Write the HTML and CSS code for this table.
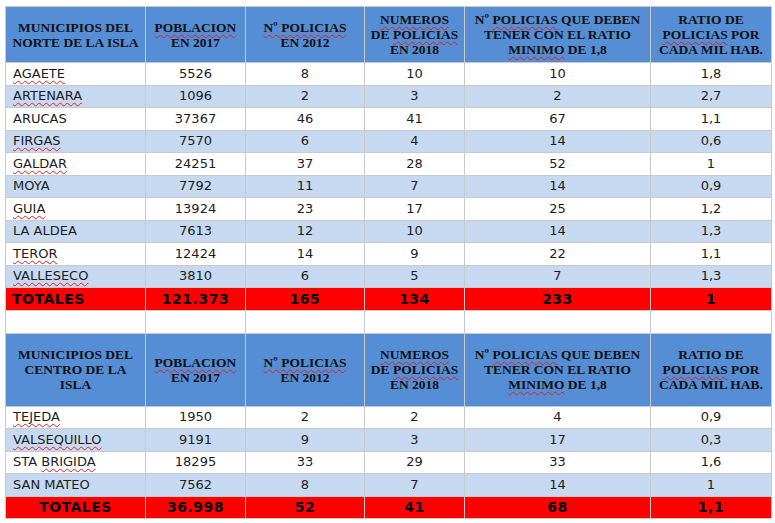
FILE: index.html
```html
<!DOCTYPE html>
<html>
<head>
<meta charset="utf-8">
<link rel="stylesheet" href="styles.css">
</head>
<body>
<table class="grid">
  <colgroup>
    <col class="c1"><col class="c2"><col class="c3"><col class="c4"><col class="c5"><col class="c6">
  </colgroup>
  <tr class="head h1">
    <th>MUNICIPIOS DEL<br>NORTE DE LA ISLA</th>
    <th><span class="sp">POBLACION</span><br>EN 2017</th>
    <th><span class="sp">Nº POLICIAS</span><br>EN 2012</th>
    <th><span class="sp">NUMEROS</span><br>DE <span class="sp">POLICIAS</span><br>EN 2018</th>
    <th>Nº <span class="sp">POLICIAS</span> QUE DEBEN<br>TENER CON EL RATIO<br><span class="sp">MINIMO</span> DE 1,8</th>
    <th>RATIO DE<br><span class="sp">POLICIAS</span> POR<br>CADA MIL HAB.</th>
  </tr>
  <tr class="row"><td class="name"><span class="sp">AGAETE</span></td><td>5526</td><td>8</td><td>10</td><td>10</td><td>1,8</td></tr>
  <tr class="row alt"><td class="name"><span class="sp">ARTENARA</span></td><td>1096</td><td>2</td><td>3</td><td>2</td><td>2,7</td></tr>
  <tr class="row"><td class="name">ARUCAS</td><td>37367</td><td>46</td><td>41</td><td>67</td><td>1,1</td></tr>
  <tr class="row alt"><td class="name"><span class="sp">FIRGAS</span></td><td>7570</td><td>6</td><td>4</td><td>14</td><td>0,6</td></tr>
  <tr class="row"><td class="name"><span class="sp">GALDAR</span></td><td>24251</td><td>37</td><td>28</td><td>52</td><td>1</td></tr>
  <tr class="row alt"><td class="name">MOYA</td><td>7792</td><td>11</td><td>7</td><td>14</td><td>0,9</td></tr>
  <tr class="row"><td class="name"><span class="sp">GUIA</span></td><td>13924</td><td>23</td><td>17</td><td>25</td><td>1,2</td></tr>
  <tr class="row alt"><td class="name">LA ALDEA</td><td>7613</td><td>12</td><td>10</td><td>14</td><td>1,3</td></tr>
  <tr class="row"><td class="name"><span class="sp">TEROR</span></td><td>12424</td><td>14</td><td>9</td><td>22</td><td>1,1</td></tr>
  <tr class="row alt"><td class="name"><span class="sp">VALLESECO</span></td><td>3810</td><td>6</td><td>5</td><td>7</td><td>1,3</td></tr>
  <tr class="row total"><td class="name">TOTALES</td><td>121.373</td><td>165</td><td>134</td><td>233</td><td>1</td></tr>
  <tr class="row blank"><td></td><td></td><td></td><td></td><td></td><td></td></tr>
  <tr class="head h2">
    <th>MUNICIPIOS DEL<br>CENTRO DE LA<br>ISLA</th>
    <th><span class="sp">POBLACION</span><br>EN 2017</th>
    <th><span class="sp">Nº POLICIAS</span><br>EN 2012</th>
    <th><span class="sp">NUMEROS</span><br>DE <span class="sp">POLICIAS</span><br>EN 2018</th>
    <th>Nº <span class="sp">POLICIAS</span> QUE DEBEN<br>TENER CON EL RATIO<br><span class="sp">MINIMO</span> DE 1,8</th>
    <th>RATIO DE<br><span class="sp">POLICIAS</span> POR<br>CADA MIL HAB.</th>
  </tr>
  <tr class="row"><td class="name"><span class="sp">TEJEDA</span></td><td>1950</td><td>2</td><td>2</td><td>4</td><td>0,9</td></tr>
  <tr class="row alt"><td class="name"><span class="sp">VALSEQUILLO</span></td><td>9191</td><td>9</td><td>3</td><td>17</td><td>0,3</td></tr>
  <tr class="row"><td class="name">STA <span class="sp">BRIGIDA</span></td><td>18295</td><td>33</td><td>29</td><td>33</td><td>1,6</td></tr>
  <tr class="row alt"><td class="name">SAN MATEO</td><td>7562</td><td>8</td><td>7</td><td>14</td><td>1</td></tr>
  <tr class="row total"><td class="center">TOTALES</td><td>36.998</td><td>52</td><td>41</td><td>68</td><td>1,1</td></tr>
</table>
</body>
</html>
```
FILE: styles.css
```css
html, body {
  margin: 0;
  padding: 0;
  background: #ffffff;
}

.grid {
  margin: 6px 0 0 5px;
  border-collapse: collapse;
  table-layout: fixed;
  width: 767px;
  font-family: "DejaVu Sans", sans-serif;
  font-size: 13px;
  color: #1c1c1c;
}

.c1 { width: 140px; }
.c2 { width: 100px; }
.c3 { width: 119px; }
.c4 { width: 100px; }
.c5 { width: 186px; }
.c6 { width: 121px; }

.grid th,
.grid td {
  border: 1px solid #c9c9c9;
  padding: 0;
  text-align: center;
  vertical-align: middle;
  overflow: hidden;
  white-space: nowrap;
}

.head th {
  background: #558ed5;
  font-family: "Liberation Serif", serif;
  font-weight: bold;
  font-size: 13.5px;
  line-height: 15px;
  color: #111;
}

.h1 { height: 56px; }
.h2 { height: 73px; }

.row { height: 22.5px; }
.row td { line-height: 16px; }

.alt td { background: #c6d9f1; }

.name {
  text-align: left !important;
  padding-left: 7px !important;
}

.total td {
  background: #ff0000;
  font-weight: bold;
  font-size: 14px;
  letter-spacing: 0.5px;
  color: #000;
  height: 20px;
}

.total .name { padding-left: 6px !important; }

.blank td { height: 22px; }

.sp {
  text-decoration: underline wavy #e02020;
  text-decoration-thickness: 1px;
  text-underline-offset: 2px;
  text-decoration-skip-ink: none;
}
```
